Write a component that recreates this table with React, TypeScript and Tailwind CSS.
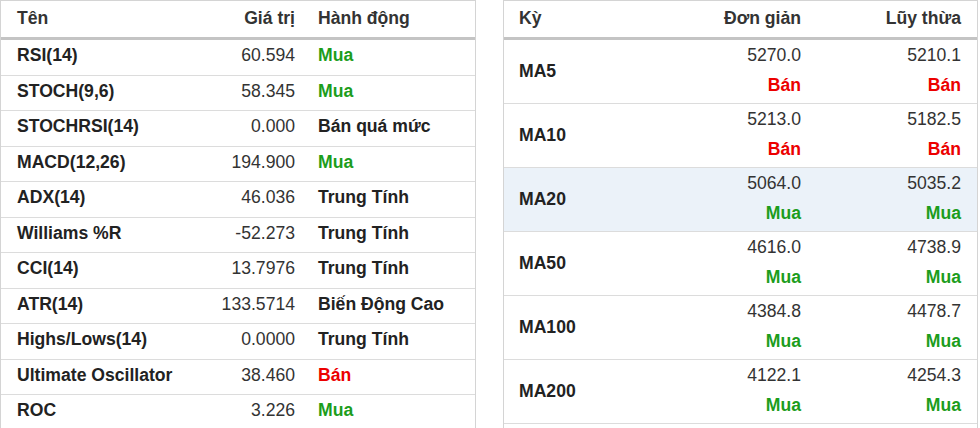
type Tone = "buy" | "sell" | "neutral";

const indicators: { name: string; value: string; action: string; tone: Tone }[] = [
  { name: "RSI(14)", value: "60.594", action: "Mua", tone: "buy" },
  { name: "STOCH(9,6)", value: "58.345", action: "Mua", tone: "buy" },
  { name: "STOCHRSI(14)", value: "0.000", action: "Bán quá mức", tone: "neutral" },
  { name: "MACD(12,26)", value: "194.900", action: "Mua", tone: "buy" },
  { name: "ADX(14)", value: "46.036", action: "Trung Tính", tone: "neutral" },
  { name: "Williams %R", value: "-52.273", action: "Trung Tính", tone: "neutral" },
  { name: "CCI(14)", value: "13.7976", action: "Trung Tính", tone: "neutral" },
  { name: "ATR(14)", value: "133.5714", action: "Biến Động Cao", tone: "neutral" },
  { name: "Highs/Lows(14)", value: "0.0000", action: "Trung Tính", tone: "neutral" },
  { name: "Ultimate Oscillator", value: "38.460", action: "Bán", tone: "sell" },
  { name: "ROC", value: "3.226", action: "Mua", tone: "buy" },
];

const averages: { period: string; simple: string; simpleTone: Tone; exp: string; expTone: Tone; active?: boolean }[] = [
  { period: "MA5", simple: "5270.0", simpleTone: "sell", exp: "5210.1", expTone: "sell" },
  { period: "MA10", simple: "5213.0", simpleTone: "sell", exp: "5182.5", expTone: "sell" },
  { period: "MA20", simple: "5064.0", simpleTone: "buy", exp: "5035.2", expTone: "buy", active: true },
  { period: "MA50", simple: "4616.0", simpleTone: "buy", exp: "4738.9", expTone: "buy" },
  { period: "MA100", simple: "4384.8", simpleTone: "buy", exp: "4478.7", expTone: "buy" },
  { period: "MA200", simple: "4122.1", simpleTone: "buy", exp: "4254.3", expTone: "buy" },
];

const toneClass = (tone: Tone) =>
  tone === "buy" ? "text-[#1c9d1c]" : tone === "sell" ? "text-[#ec0000]" : "text-[#222]";

const signal = (tone: Tone) => (tone === "buy" ? "Mua" : tone === "sell" ? "Bán" : "Trung Tính");

export default function App() {
  return (
    <div
      className="flex h-[428px] w-[980px] items-start overflow-hidden bg-white text-[17.6px] text-[#333]"
      style={{ fontFamily: '"Liberation Sans", Arial, sans-serif' }}
    >
      {/* Technical indicators */}
      <div className="w-[476px] shrink-0 border-x border-t border-[#d4d4d4]">
        <div className="grid h-[39px] grid-cols-[200px_105px_1fr] border-b-[3px] border-[#c4c4c4] font-bold leading-[20px] text-[#333]">
          <div className="pl-[16px] pt-[7px]">Tên</div>
          <div className="pr-[11px] pt-[7px] text-right">Giá trị</div>
          <div className="pl-[12px] pt-[7px]">Hành động</div>
        </div>
        {indicators.map((row) => (
          <div
            key={row.name}
            className="grid h-[35.5px] grid-cols-[200px_105px_1fr] border-b border-[#dcdcdc] leading-[20px]"
          >
            <div className="pl-[16px] pt-[5px] font-bold text-[#222]">{row.name}</div>
            <div className="pr-[11px] pt-[5px] text-right">{row.value}</div>
            <div className={`pl-[12px] pt-[5px] font-bold ${toneClass(row.tone)}`}>{row.action}</div>
          </div>
        ))}
        <div className="h-[36px]" />
      </div>

      <div className="w-[27px] shrink-0" />

      {/* Moving averages */}
      <div className="w-[475px] shrink-0 border-x border-t border-[#d4d4d4]">
        <div className="grid h-[39px] grid-cols-[1fr_160px_160px] border-b-[3px] border-[#c4c4c4] font-bold leading-[20px] text-[#333]">
          <div className="pl-[15px] pt-[7px]">Kỳ</div>
          <div className="pr-[16px] pt-[7px] text-right">Đơn giản</div>
          <div className="pr-[16px] pt-[7px] text-right">Lũy thừa</div>
        </div>
        {averages.map((row) => (
          <div
            key={row.period}
            className={`grid h-[64px] grid-cols-[1fr_160px_160px] border-b border-[#dcdcdc] leading-[30px] ${
              row.active ? "bg-[#ebf2f9]" : "bg-white"
            }`}
          >
            <div className="flex items-center pb-[1px] pl-[15px] font-bold text-[#222]">{row.period}</div>
            <div className="pr-[16px] text-right">
              <div>{row.simple}</div>
              <div className={`font-bold ${toneClass(row.simpleTone)}`}>{signal(row.simpleTone)}</div>
            </div>
            <div className="pr-[16px] text-right">
              <div>{row.exp}</div>
              <div className={`font-bold ${toneClass(row.expTone)}`}>{signal(row.expTone)}</div>
            </div>
          </div>
        ))}
        <div className="h-[64px]" />
      </div>
    </div>
  );
}
